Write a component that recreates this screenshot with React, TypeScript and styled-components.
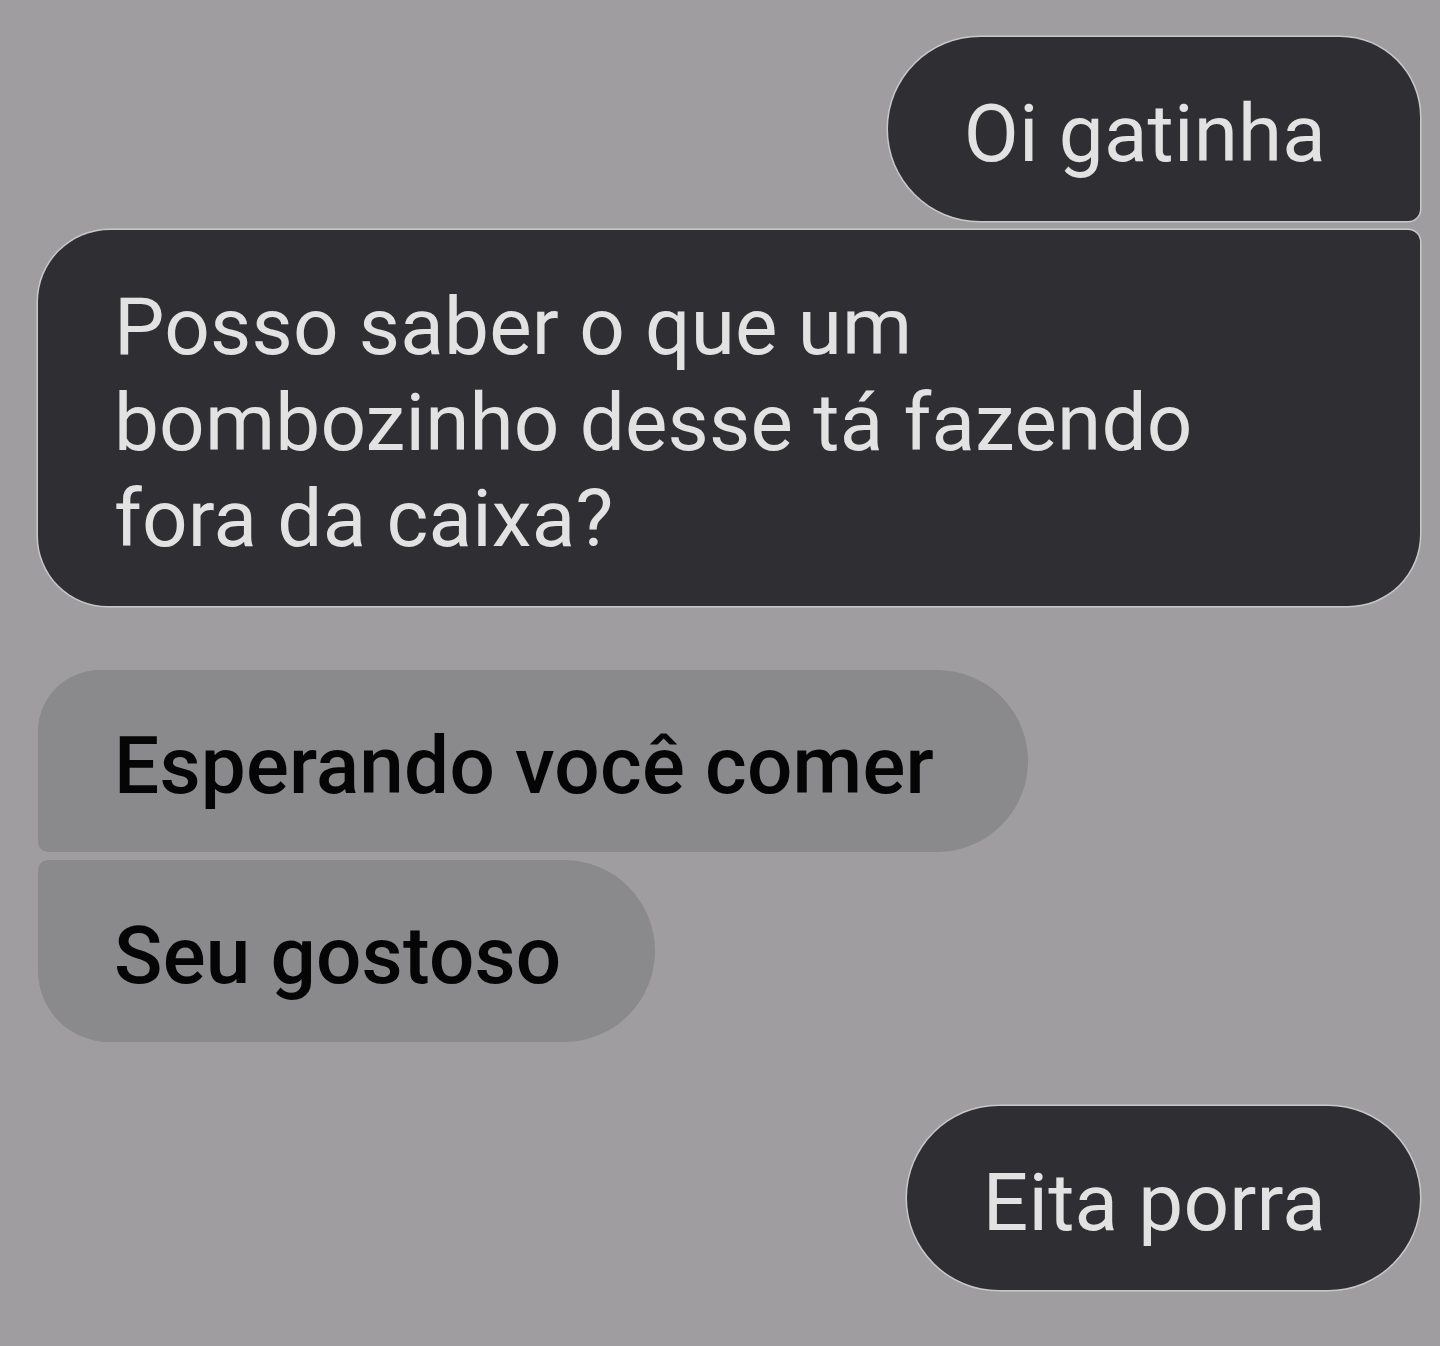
import styled, { createGlobalStyle } from "styled-components";

const GlobalStyle = createGlobalStyle`
    html, body {
        margin: 0;
        padding: 0;
        background: #9f9da0;
    }
    body {
        font-family: Roboto, "Noto Sans", "Liberation Sans", sans-serif;
    }
`

type Side = 'out' | 'in';

type Message = {
    id: string;
    text: string;
    radius: string;
};

const groups: { id: string; side: Side; messages: Message[] }[] = [{
    id: 'g1',
    side: 'out',
    messages: [{
        id: 'm1',
        text: 'Oi gatinha',
        radius: '92px 80px 12px 92px',
    },{
        id: 'm2',
        text: 'Posso saber o que um bombozinho desse tá fazendo fora da caixa?',
        radius: '72px 12px 72px 70px',
    }],
},{
    id: 'g2',
    side: 'in',
    messages: [{
        id: 'm3',
        text: 'Esperando você comer',
        radius: '62px 92px 92px 10px',
    },{
        id: 'm4',
        text: 'Seu gostoso',
        radius: '10px 92px 92px 72px',
    }],
},{
    id: 'g3',
    side: 'out',
    messages: [{
        id: 'm5',
        text: 'Eita porra',
        radius: '92px',
    }],
}]

const App = () => {
    return (
        <>
            <GlobalStyle />
            <StyledPage>
                {groups.map((group)=>(
                    <StyledGroup key={group.id} $side={group.side}>
                        {group.messages.map((message)=>(
                            <StyledBubble key={message.id} $side={group.side} $radius={message.radius}>
                                {message.text}
                            </StyledBubble>
                        ))}
                    </StyledGroup>
                ))}
            </StyledPage>
        </>
    )
}

const StyledPage = styled.div`
    box-sizing: border-box;
    min-height: 1346px;
    padding: 37px 20px 0 38px;
    display: flex;
    flex-direction: column;
    gap: 64px;
`

const StyledGroup = styled.div<{ $side: Side }>`
    display: flex;
    flex-direction: column;
    align-items: ${({ $side }) => ($side === 'out' ? 'flex-end' : 'flex-start')};
    gap: ${({ $side }) => ($side === 'out' ? '9px' : '8px')};
`

const StyledBubble = styled.div<{ $side: Side; $radius: string }>`
    box-sizing: border-box;
    max-width: 100%;
    padding: ${({ $side }) => ($side === 'out' ? '49px 94px 39px 76px' : '48px 94px 38px 76px')};
    border-radius: ${({ $radius }) => $radius};
    font-size: 80px;
    line-height: 96px;
    letter-spacing: 0.2px;
    background: ${({ $side }) => ($side === 'out' ? '#2f2e33' : '#8a898c')};
    color: ${({ $side }) => ($side === 'out' ? '#e2e2e2' : '#050505')};
    font-weight: ${({ $side }) => ($side === 'out' ? 400 : 500)};
    box-shadow: ${({ $side }) => ($side === 'out' ? '0 0 0 1.5px rgba(235, 235, 235, 0.55)' : 'none')};
`

export default App
